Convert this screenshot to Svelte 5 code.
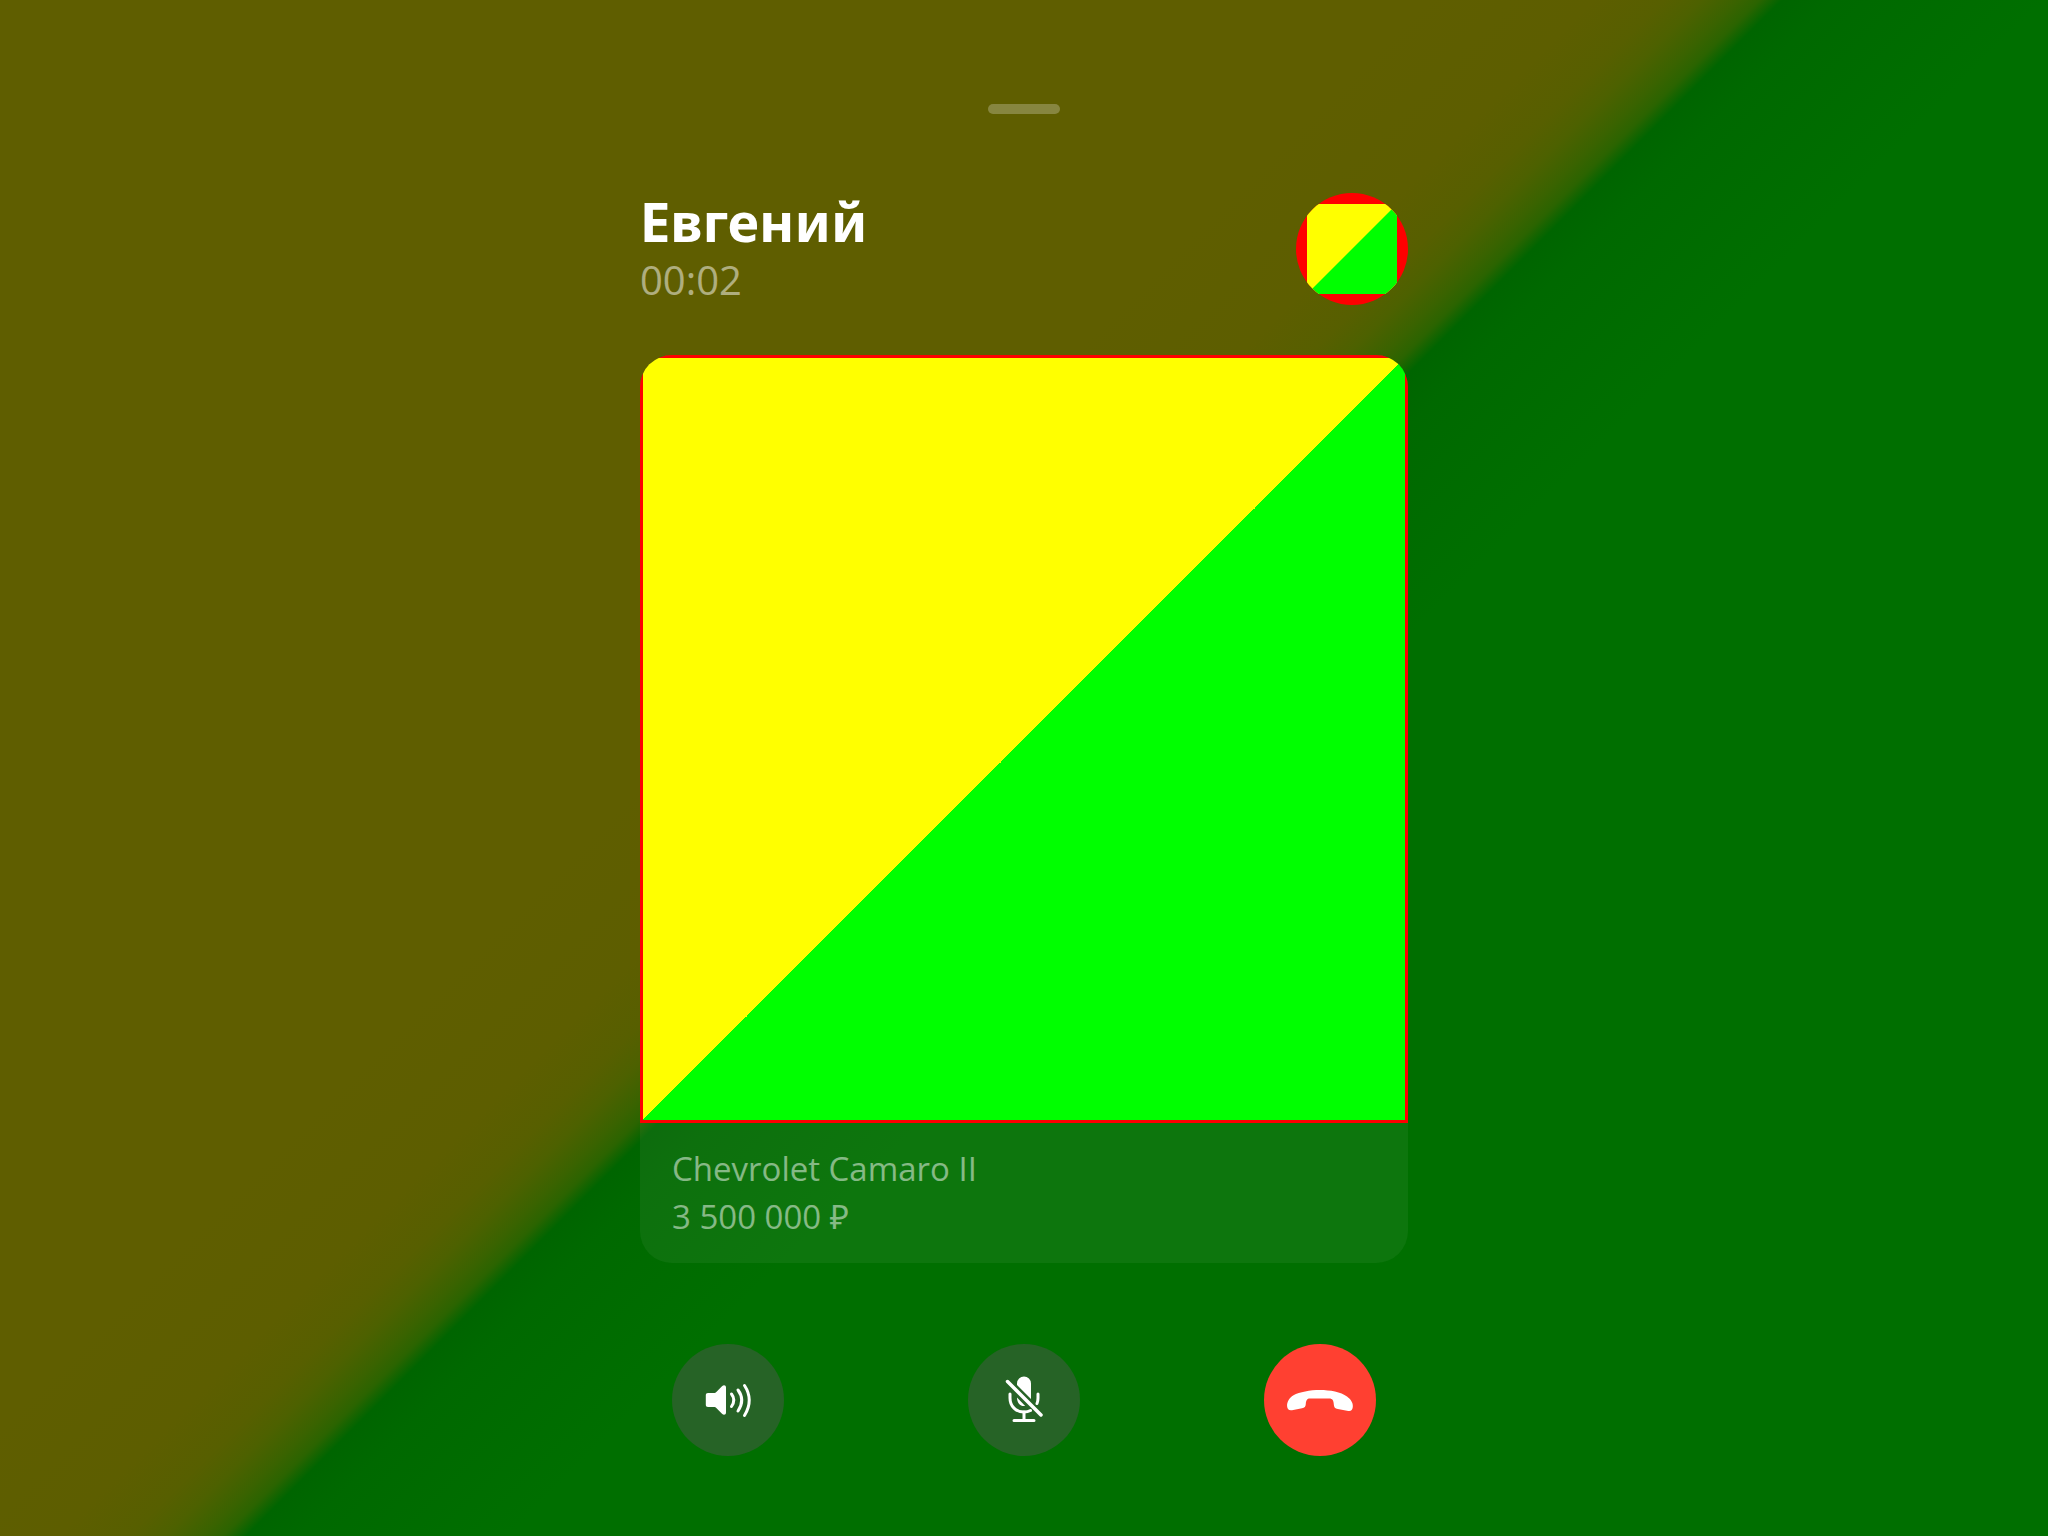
<script>
  let seconds = $state(2);
  const time = $derived(
    `${String(Math.floor(seconds / 60)).padStart(2, '0')}:${String(seconds % 60).padStart(2, '0')}`
  );
</script>

<main class="call">
  <button class="grabber" aria-label="Свернуть"></button>

  <div class="content">
    <header class="caller">
      <div>
        <h1>Евгений</h1>
        <p class="time">{time}</p>
      </div>
      <svg class="avatar" viewBox="0 0 112 112" aria-hidden="true">
        <defs>
          <clipPath id="round"><circle cx="56" cy="56" r="56" /></clipPath>
        </defs>
        <g clip-path="url(#round)">
          <rect width="112" height="112" fill="#f00" />
          <rect x="11" y="11" width="90" height="90" fill="#ff0" />
          <path d="M101 11V101H11Z" fill="#0f0" />
        </g>
      </svg>
    </header>

    <section class="card">
      <div class="photo"></div>
      <div class="info">
        <p>Chevrolet Camaro II</p>
        <p>3 500 000 ₽</p>
      </div>
    </section>

    <div class="controls">
      <button class="round" aria-label="Динамик">
        <svg viewBox="0 0 112 112" fill="none" stroke="#fff" stroke-linecap="round">
          <path
            d="M36 49h6c1 0 1.600-.3 2.300-1L50 42.300c1.800-1.700 4-1 4 1.200v25c0 2.200-2.200 3-4 1.300L44.300 64c-.7-.7-1.300-1-2.300-1h-6c-1.400 0-2.200-.8-2.200-2.200V51.200c0-1.400.8-2.200 2.200-2.200z"
            fill="#fff"
            stroke="none"
          />
          <path d="M59.500 50q4.600 6 0 12.500M66 46q7.500 10 0 21M72.500 41.500q9.500 14.500 0 30" stroke-width="3" />
        </svg>
      </button>
      <button class="round" aria-label="Выключить микрофон">
        <svg viewBox="0 0 112 112" fill="none" stroke="#fff" stroke-linecap="round">
          <path d="M49 39.500a7 7 0 0 1 14 0V55L49 41zM49 53.500L57.200 62C52.500 62.800 49 59 49 53.500z" fill="#fff" stroke="none" />
          <path d="M42 50v4c0 8.500 6 14 14 14 2.500 0 4.600-.5 6.500-1.500M70 50v4c0 2-.3 3.800-1 5.500" stroke-width="3" />
          <path d="M56 68v8M46 76.500h20" stroke-width="3" />
          <path d="M39.500 37.500L73 71" stroke-width="3.500" />
        </svg>
      </button>
      <button class="round end" aria-label="Завершить звонок">
        <svg viewBox="0 0 112 112" fill="#fff">
          <path
            d="M56 46c10 0 21 2 27 6.500 4 3 6.300 6.500 5.800 10.500-.4 3-1.600 4.400-4.500 4l-10.500-2c-2.800-.5-3.800-1.600-4-4.500-.2-4-1.300-6-4.500-6H46c-3 0-4 2-4.200 5.500-.2 2.800-1.200 3.700-3.800 4.200l-10 2c-3 .6-4.600-1-4.900-4-.3-4 2-8.500 6.400-11C35.500 48 46 46 56 46z"
          />
        </svg>
      </button>
    </div>
  </div>
</main>

<style>
  :global(body) {
    margin: 0;
  }

  .call {
    box-sizing: border-box;
    min-height: 100vh;
    padding: 104px 24px 80px;
    display: flex;
    flex-direction: column;
    align-items: center;
    font-family: "Open Sans", "Noto Sans", sans-serif;
    color: #fff;
    background: linear-gradient(
      135deg,
      #5f5e00 calc(50% - 260px),
      #5d5e00 calc(50% - 140px),
      #575f00 calc(50% - 90px),
      #4d6100 calc(50% - 64px),
      #3a6300 calc(50% - 38px),
      #2b6400 calc(50% - 23px),
      #006500 calc(50% - 7px),
      #006900 calc(50% + 30px),
      #006f00 calc(50% + 180px)
    );
  }

  button {
    border: 0;
    padding: 0;
    cursor: pointer;
  }

  .grabber {
    width: 72px;
    height: 10px;
    border-radius: 5px;
    background: rgba(255, 255, 255, 0.25);
  }

  .content {
    width: 100%;
    max-width: 768px;
  }

  .caller {
    display: flex;
    justify-content: space-between;
    align-items: center;
    margin: 76px 0 47px;
  }

  h1,
  p {
    margin: 0;
  }

  h1 {
    font-family: "Noto Sans", sans-serif;
    font-size: 54px;
    line-height: 62px;
    font-weight: 700;
  }

  .time {
    font-size: 40px;
    line-height: 56px;
    color: rgba(255, 255, 255, 0.5);
  }

  .avatar {
    width: 112px;
    height: 112px;
    display: block;
  }

  .card {
    border-radius: 32px;
    overflow: hidden;
    background: rgba(255, 255, 255, 0.05);
  }

  .photo {
    box-sizing: border-box;
    aspect-ratio: 1;
    border: 3px solid #f00;
    background: linear-gradient(135deg, #ff0 50%, #0f0 50%);
  }

  .info {
    padding: 22px 32px;
    font-size: 33px;
    line-height: 48px;
    color: rgba(255, 255, 255, 0.5);
  }

  .controls {
    display: flex;
    justify-content: space-between;
    padding: 81px 32px 0;
  }

  .round {
    width: 112px;
    height: 112px;
    border-radius: 50%;
    background: #266326;
  }

  .round svg {
    display: block;
    width: 100%;
  }

  .end {
    background: #ff4031;
  }
</style>
